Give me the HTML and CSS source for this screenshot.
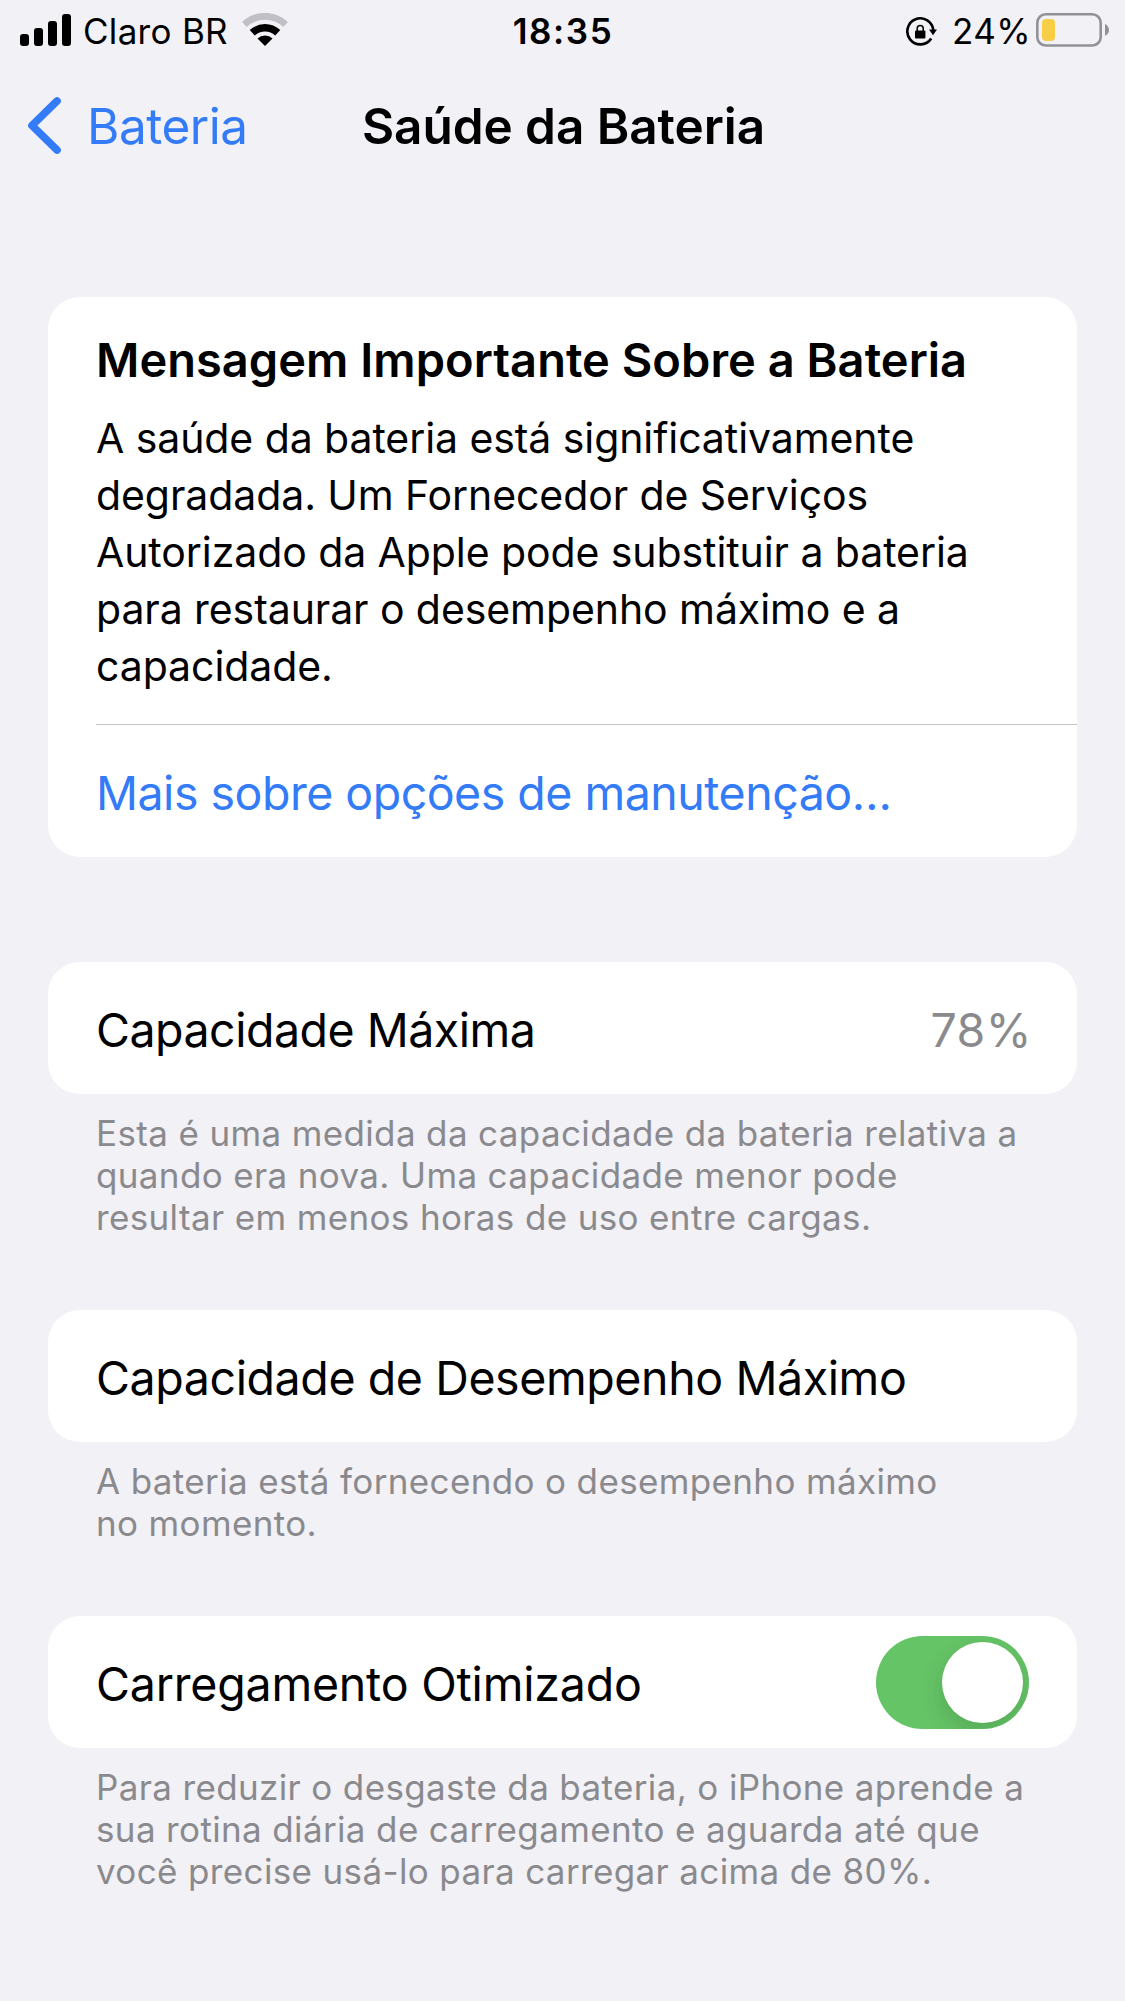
FILE: index.html
```
<!DOCTYPE html>
<html lang="pt-BR">
<head>
<meta charset="UTF-8" />
<meta name="viewport" content="width=device-width, initial-scale=1" />
<title>Saúde da Bateria</title>
<link rel="stylesheet" href="styles.css">
</head>
<body>

<div class="status-bar">
  <div class="status-left">
    <svg class="signal" width="51" height="32" viewBox="0 0 51 32">
      <rect x="0" y="20" width="9" height="12" rx="3" />
      <rect x="14" y="14" width="9" height="18" rx="3" />
      <rect x="28" y="7" width="9" height="25" rx="3" />
      <rect x="42" y="0" width="9" height="32" rx="3" />
    </svg>
    <span class="carrier">Claro BR</span>
    <svg class="wifi" width="46" height="34" viewBox="0 0 46 34">
      <path d="M2.4 11.4A30.2 30.2 0 0 1 43.6 11.4" fill="none" stroke="#c1c0c6" stroke-width="6.8" />
      <path d="M10.25 19.8A18.7 18.7 0 0 1 35.75 19.8" fill="none" stroke="#000" stroke-width="7.4" />
      <path d="M15.5 25.5A11 11 0 0 1 30.5 25.5L23 33Z" />
    </svg>
  </div>
  <span class="clock">18:35</span>
  <div class="status-right">
    <svg class="lock" width="32" height="29" viewBox="0 0 32 29">
      <path d="M25.2 21.5A13 13 0 1 1 27.3 13.5" fill="none" stroke="#000" stroke-width="2.6" />
      <path d="M23 12.5H31L27 18.2Z" />
      <rect x="9" y="13.5" width="10.4" height="8" rx="1" />
      <path d="M11.2 14V11.6a3 3 0 0 1 6 0V14" fill="none" stroke="#000" stroke-width="1.5" />
    </svg>
    <span class="percent">24%</span>
    <svg class="battery" width="73" height="34" viewBox="0 0 73 34">
      <rect x="1.3" y="1.3" width="63.4" height="31.2" rx="8.5" fill="none" stroke="#929296" stroke-width="2.6" />
      <rect x="6" y="6" width="13" height="22" rx="4" fill="#f7ce46" />
      <path d="M69 11C74.3 13.4 74.3 20.4 69 22.8Z" fill="#929296" />
    </svg>
  </div>
</div>

<div class="nav">
  <a class="back">
    <svg width="33" height="58" viewBox="0 0 33 58">
      <path d="M29 4L4 28.5L29 53" fill="none" stroke="#347bf7" stroke-width="7.6" stroke-linecap="round" stroke-linejoin="round" />
    </svg>
    <span>Bateria</span>
  </a>
  <h1>Saúde da Bateria</h1>
</div>

<main>
  <section class="card message">
    <div class="message-body">
      <h2>Mensagem Importante Sobre a Bateria</h2>
      <p>A saúde da bateria está significativamente degradada. Um Fornecedor de Serviços Autorizado da Apple pode substituir a bateria para restaurar o desempenho máximo e a capacidade.</p>
    </div>
    <a class="row link">Mais sobre opções de manutenção…</a>
  </section>

  <section class="card row">
    <span class="tight">Capacidade Máxima</span>
    <span class="value">78%</span>
  </section>
  <p class="footer">Esta é uma medida da capacidade da bateria relativa a<br>quando era nova. Uma capacidade menor pode<br>resultar em menos horas de uso entre cargas.</p>

  <section class="card row">
    <span>Capacidade de Desempenho Máximo</span>
  </section>
  <p class="footer">A bateria está fornecendo o desempenho máximo<br>no momento.</p>

  <section class="card row">
    <span class="loose">Carregamento Otimizado</span>
    <div class="toggle"><div class="knob"></div></div>
  </section>
  <p class="footer">Para reduzir o desgaste da bateria, o iPhone aprende a<br>sua rotina diária de carregamento e aguarda até que<br>você precise usá-lo para carregar acima de 80%.</p>
</main>

</body>
</html>
```

FILE: styles.css
```
* {
  box-sizing: border-box;
}
body {
  margin: 0;
  min-height: 100vh;
  background: #f2f1f6;
  color: #000;
  font-family: Inter, "Liberation Sans", sans-serif;
}
h1, h2, p {
  margin: 0;
}
svg {
  display: block;
  flex-shrink: 0;
}

/* Status bar */
.status-bar {
  display: grid;
  grid-template-columns: 1fr auto 1fr;
  align-items: center;
  height: 62px;
  padding: 0 16px 0 20px;
  font-size: 35px;
  line-height: 42px;
}
.status-left, .status-right {
  display: flex;
  align-items: center;
}
.status-right {
  justify-content: flex-end;
}
.signal {
  margin-top: -2px;
}
.carrier {
  margin: 0 14px 0 12px;
  letter-spacing: 0.3px;
}
.wifi {
  margin-top: -3px;
}
.clock {
  margin-right: 3px;
  font-weight: 600;
  letter-spacing: 1.6px;
}
.percent {
  margin: 0 5px 0 14px;
  letter-spacing: 0.4px;
}
.battery {
  margin-top: -2px;
}

/* Navigation */
.nav {
  display: grid;
  grid-template-columns: 1fr auto 1fr;
  align-items: center;
  height: 128px;
  padding-left: 29px;
  padding-right: 27px;
  font-size: 49.5px;
  line-height: 60px;
}
.back {
  display: flex;
  align-items: center;
  gap: 26px;
  margin-left: -1px;
  color: #347bf7;
  letter-spacing: -0.5px;
}
.nav h1 {
  font-size: inherit;
  font-weight: 600;
  letter-spacing: -0.07px;
}

/* Grouped list */
main {
  padding: 107px 48px 0;
}
.card {
  background: #fff;
  border-radius: 32px;
}
.message {
  margin-bottom: 105px;
}
.message-body {
  margin-left: 48px;
  padding: 34px 48px 29px 0;
  border-bottom: 1px solid #c4c4c6;
  line-height: 57px;
}
.message h2 {
  margin-bottom: 22px;
  font-size: 47px;
  font-weight: 600;
  letter-spacing: 0.03px;
}
.message p {
  font-size: 41px;
  letter-spacing: -0.08px;
}
.row {
  display: flex;
  align-items: center;
  justify-content: space-between;
  height: 132px;
  padding: 4px 48px 0;
  font-size: 46.5px;
  letter-spacing: -0.4px;
}
.tight, .link {
  letter-spacing: -0.5px;
}
.loose {
  letter-spacing: -0.2px;
}
.link {
  color: #347bf7;
}
.value {
  margin-right: -3px;
  color: #8a8a8d;
  letter-spacing: 0.5px;
}
.footer {
  padding: 18px 48px 72px;
  color: #8a8a8e;
  font-size: 35px;
  line-height: 42px;
  letter-spacing: 0.36px;
  white-space: nowrap;
}
.footer:last-child {
  padding-bottom: 0;
}

/* Switch */
.toggle {
  display: flex;
  justify-content: flex-end;
  width: 153px;
  height: 93px;
  margin-top: -3px;
  padding: 6px;
  border-radius: 47px;
  background: #65c466;
  overflow: hidden;
}
.knob {
  width: 81px;
  height: 81px;
  border-radius: 50%;
  background: #fff;
  box-shadow: 0 9px 24px rgba(0, 0, 0, 0.14);
}
```
